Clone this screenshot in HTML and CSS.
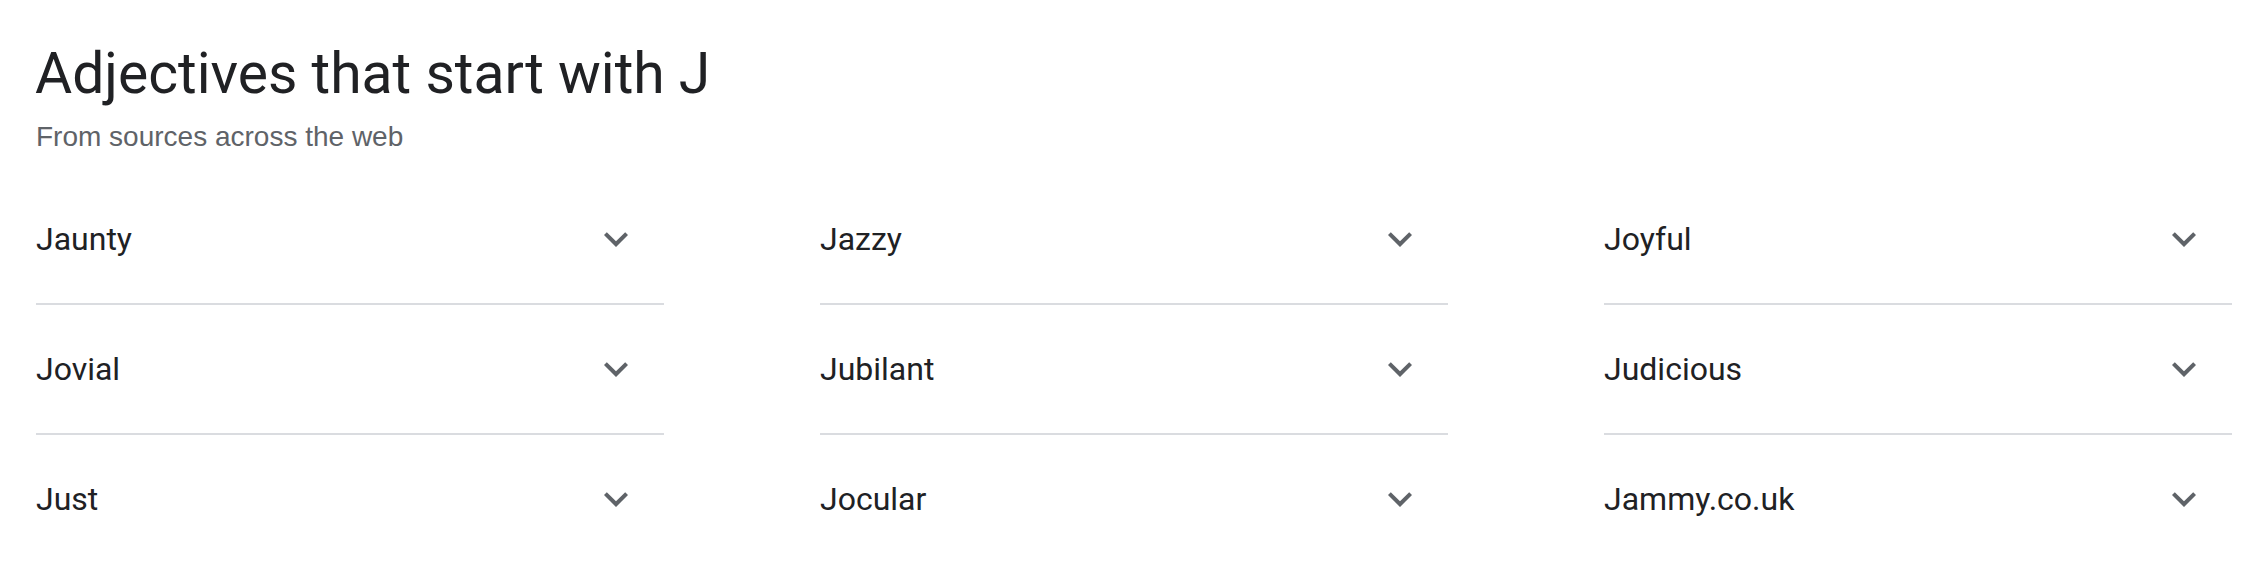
FILE: index.html
```html
<!DOCTYPE html>
<html lang="en">
<head>
<meta charset="utf-8">
<title>Adjectives that start with J</title>
<link rel="stylesheet" href="styles.css">
</head>
<body>
<main class="panel">
  <header class="head">
    <h1 class="title">Adjectives that start with J</h1>
    <p class="subtitle">From sources across the web</p>
  </header>
  <div class="columns">
    <ul class="col">
      <li class="item"><span class="word">Jaunty</span><svg class="chev" viewBox="0 0 24 24"><path d="M16.59 8.59L12 13.17 7.41 8.59 6 10l6 6 6-6z"/></svg></li>
      <li class="item"><span class="word">Jovial</span><svg class="chev" viewBox="0 0 24 24"><path d="M16.59 8.59L12 13.17 7.41 8.59 6 10l6 6 6-6z"/></svg></li>
      <li class="item"><span class="word">Just</span><svg class="chev" viewBox="0 0 24 24"><path d="M16.59 8.59L12 13.17 7.41 8.59 6 10l6 6 6-6z"/></svg></li>
    </ul>
    <ul class="col">
      <li class="item"><span class="word">Jazzy</span><svg class="chev" viewBox="0 0 24 24"><path d="M16.59 8.59L12 13.17 7.41 8.59 6 10l6 6 6-6z"/></svg></li>
      <li class="item"><span class="word">Jubilant</span><svg class="chev" viewBox="0 0 24 24"><path d="M16.59 8.59L12 13.17 7.41 8.59 6 10l6 6 6-6z"/></svg></li>
      <li class="item"><span class="word">Jocular</span><svg class="chev" viewBox="0 0 24 24"><path d="M16.59 8.59L12 13.17 7.41 8.59 6 10l6 6 6-6z"/></svg></li>
    </ul>
    <ul class="col">
      <li class="item"><span class="word">Joyful</span><svg class="chev" viewBox="0 0 24 24"><path d="M16.59 8.59L12 13.17 7.41 8.59 6 10l6 6 6-6z"/></svg></li>
      <li class="item"><span class="word">Judicious</span><svg class="chev" viewBox="0 0 24 24"><path d="M16.59 8.59L12 13.17 7.41 8.59 6 10l6 6 6-6z"/></svg></li>
      <li class="item"><span class="word">Jammy.co.uk</span><svg class="chev" viewBox="0 0 24 24"><path d="M16.59 8.59L12 13.17 7.41 8.59 6 10l6 6 6-6z"/></svg></li>
    </ul>
  </div>
</main>
</body>
</html>
```

FILE: styles.css
```css
html, body {
  margin: 0;
  padding: 0;
  background: #ffffff;
}

body {
  font-family: Roboto, "Noto Sans", Arial, sans-serif;
  color: #202124;
}

.panel {
  padding: 40px 28px 0 36px;
}

.title {
  margin: 0 0 0 -1px;
  font-family: Roboto, "Noto Sans", sans-serif;
  font-weight: 400;
  font-size: 57px;
  line-height: 68px;
  color: #202124;
}

.subtitle {
  margin: 13px 0 0 0;
  font-family: "Liberation Sans", Arial, sans-serif;
  font-size: 28px;
  line-height: 32px;
  color: #5f6368;
}

.columns {
  display: grid;
  grid-template-columns: repeat(3, 1fr);
  column-gap: 156px;
  margin-top: 22px;
}

.col {
  list-style: none;
  margin: 0;
  padding: 0;
}

.item {
  display: flex;
  align-items: center;
  justify-content: space-between;
  height: 128px;
  padding-right: 24px;
  border-bottom: 2px solid #dadce0;
}

.item:last-child {
  border-bottom: none;
}

.word {
  font-family: Roboto, "Noto Sans", sans-serif;
  font-size: 32px;
  line-height: 40px;
  color: #202124;
}

.chev {
  width: 48px;
  height: 48px;
  fill: #5f6368;
  flex: none;
}
```
